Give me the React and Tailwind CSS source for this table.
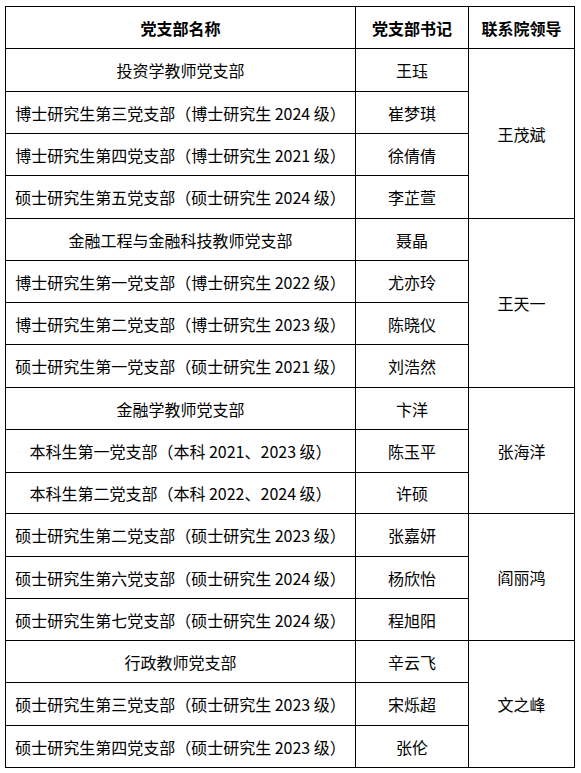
import React from "react";

const groups = [
  {
    leader: "王茂斌",
    rows: [
      ["投资学教师党支部", "王珏"],
      ["博士研究生第三党支部（博士研究生 2024 级）", "崔梦琪"],
      ["博士研究生第四党支部（博士研究生 2021 级）", "徐倩倩"],
      ["硕士研究生第五党支部（硕士研究生 2024 级）", "李芷萱"],
    ],
  },
  {
    leader: "王天一",
    rows: [
      ["金融工程与金融科技教师党支部", "聂晶"],
      ["博士研究生第一党支部（博士研究生 2022 级）", "尤亦玲"],
      ["博士研究生第二党支部（博士研究生 2023 级）", "陈晓仪"],
      ["硕士研究生第一党支部（硕士研究生 2021 级）", "刘浩然"],
    ],
  },
  {
    leader: "张海洋",
    rows: [
      ["金融学教师党支部", "卞洋"],
      ["本科生第一党支部（本科 2021、2023 级）", "陈玉平"],
      ["本科生第二党支部（本科 2022、2024 级）", "许硕"],
    ],
  },
  {
    leader: "阎丽鸿",
    rows: [
      ["硕士研究生第二党支部（硕士研究生 2023 级）", "张嘉妍"],
      ["硕士研究生第六党支部（硕士研究生 2024 级）", "杨欣怡"],
      ["硕士研究生第七党支部（硕士研究生 2024 级）", "程旭阳"],
    ],
  },
  {
    leader: "文之峰",
    rows: [
      ["行政教师党支部", "辛云飞"],
      ["硕士研究生第三党支部（硕士研究生 2023 级）", "宋烁超"],
      ["硕士研究生第四党支部（硕士研究生 2023 级）", "张伦"],
    ],
  },
];

const spanClass = { 3: "row-span-3", 4: "row-span-4" };

const cell =
  "flex items-center justify-center border-r border-b border-black whitespace-nowrap";

export default function App() {
  return (
    <div className="w-[581px] h-[773px] bg-white pt-[6px] pl-[5px]">
      <div
        className="grid w-[570px] grid-cols-[350px_113px_106px] grid-rows-[42px_43px_42px_42px_43px_42px_42px_42px_43px_42px_43px_41px_43px_42px_42px_42px_43px_42px] border-l border-t border-black text-[16px] text-black"
        style={{ fontFamily: '"Noto Sans CJK SC", "Noto Sans", sans-serif' }}
      >
        <div className={cell + " font-bold"}>党支部名称</div>
        <div className={cell + " font-bold"}>党支部书记</div>
        <div className={cell + " font-bold"}>联系院领导</div>
        {groups.map((g, gi) =>
          g.rows.map((r, ri) => (
            <React.Fragment key={gi + "-" + ri}>
              <div className={cell}>{r[0]}</div>
              <div className={cell}>{r[1]}</div>
              {ri === 0 && (
                <div className={cell + " " + spanClass[g.rows.length]}>
                  {g.leader}
                </div>
              )}
            </React.Fragment>
          ))
        )}
      </div>
    </div>
  );
}
